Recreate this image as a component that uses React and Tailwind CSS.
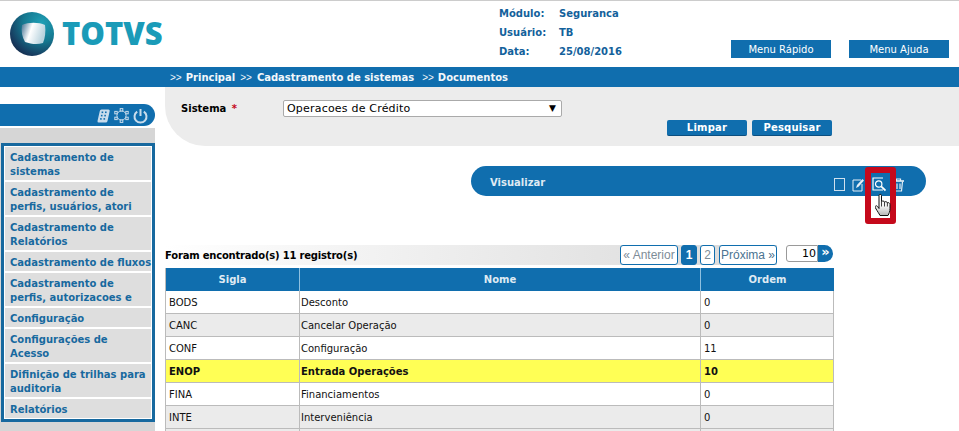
import React from "react";

const font = { fontFamily: '"DejaVu Sans", Verdana, sans-serif' };
const arrowFont = { fontFamily: '"Liberation Sans", Arial, sans-serif' };

const menuItems = [
  ["Cadastramento de", "sistemas"],
  ["Cadastramento de", "perfis, usuários, atori"],
  ["Cadastramento de", "Relatórios"],
  ["Cadastramento de fluxos"],
  ["Cadastramento de", "perfis, autorizacoes e"],
  ["Configuração"],
  ["Configurações de", "Acesso"],
  ["Difinição de trilhas para", "auditoria"],
  ["Relatórios"],
];

const rows = [
  ["BODS", "Desconto", "0"],
  ["CANC", "Cancelar Operação", "0"],
  ["CONF", "Configuração", "11"],
  ["ENOP", "Entrada Operações", "10", true],
  ["FINA", "Financiamentos", "0"],
  ["INTE", "Interveniência", "0"],
];

// TOTVS globe
const Globe = () => (
  <svg width="44" height="44" viewBox="0 0 44 44" className="shrink-0">
    <defs>
      <radialGradient id="globe" cx="0.72" cy="0.25" r="0.95">
        <stop offset="0" stopColor="#1fa0b6" />
        <stop offset="0.45" stopColor="#15778f" />
        <stop offset="0.8" stopColor="#173a5e" />
        <stop offset="1" stopColor="#101f3a" />
      </radialGradient>
      <linearGradient id="globeCore" x1="0" y1="0" x2="1" y2="0.3">
        <stop offset="0" stopColor="#3f6f90" />
        <stop offset="0.45" stopColor="#ffffff" />
        <stop offset="1" stopColor="#b9d3de" />
      </linearGradient>
    </defs>
    <circle cx="22" cy="22" r="22" fill="url(#globe)" />
    <path d="M12 13 C18 10 29 10 35 13 C36 19 35 26 33 31 C27 33 21 32 15 30 C12 25 11 19 12 13 Z" fill="url(#globeCore)" />
  </svg>
);

const SideIcons = () => (
  <div className="flex items-center gap-[4px] pr-[7px] pt-[1px]">
    <svg width="13" height="14" viewBox="0 0 13 14">
      <path d="M4.5 0.5 H11.5 Q13 0.5 12.7 2 L10.5 12 Q10.2 13.5 8.7 13.5 H1.7 Q0.3 13.5 0.5 12 L2.8 2 Q3 0.5 4.5 0.5 Z" fill="#c9dcec" />
      <g fill="#106eae">
        <rect x="4.6" y="2.5" width="1.6" height="1.6" />
        <rect x="8" y="2.5" width="1.6" height="1.6" />
        <rect x="3.9" y="5.8" width="1.6" height="1.6" />
        <rect x="7.3" y="5.8" width="1.6" height="1.6" />
        <rect x="3.1" y="9.1" width="1.6" height="1.6" />
        <rect x="6.5" y="9.1" width="1.6" height="1.6" />
      </g>
    </svg>
    <svg width="15" height="15" viewBox="0 0 15 15" fill="#106eae" stroke="#c9dcec" strokeWidth="1">
      <circle cx="7.5" cy="7.5" r="4.6" />
      <rect x="6.2" y="0.6" width="2.6" height="2.4" />
      <rect x="6.2" y="12" width="2.6" height="2.4" />
      <rect x="0.8" y="3.4" width="2.4" height="2.4" />
      <rect x="11.8" y="3.4" width="2.4" height="2.4" />
      <rect x="0.8" y="9.2" width="2.4" height="2.4" />
      <rect x="11.8" y="9.2" width="2.4" height="2.4" />
    </svg>
    <svg width="15" height="16" viewBox="0 0 15 16" fill="none" stroke="#c9dcec" strokeWidth="2">
      <path d="M4.2 3.6 A6 6 0 1 0 10.8 3.6" />
      <path d="M7.5 1 V8" />
    </svg>
  </div>
);

const ToolIcons = () => (
  <div className="flex items-center pr-[21px] pt-[7px]">
    <div className="w-[11px] h-[13px] border border-[#cfe0ee]" />
    <svg width="13" height="14" viewBox="0 0 13 14" fill="none" stroke="#e6eff6" strokeWidth="1" className="ml-[7px]">
      <path d="M9 2 H1 V13 H10 V6" />
      <path d="M4 10 L5 7 L10.5 1 L12 2.5 L6.5 8.8 Z" fill="#e6eff6" stroke="none" />
    </svg>
    <svg width="14" height="15" viewBox="0 0 14 15" fill="none" stroke="#ffffff" strokeWidth="1.2" className="ml-[7px]">
      <path d="M11 1 H1 V13 H11" />
      <circle cx="6.7" cy="7" r="3.2" />
      <path d="M9.2 9.4 L13.5 13.5" strokeWidth="1.8" />
    </svg>
    <svg width="13" height="14" viewBox="0 0 13 14" fill="none" stroke="#e6eff6" strokeWidth="1.2" className="ml-[6px]">
      <path d="M1 3 H12" strokeWidth="1.6" />
      <path d="M4.5 3 V1 H8.5 V3" />
      <path d="M2.5 3.5 L3.5 13 H9.5 L10.5 3.5" />
      <path d="M5 5.5 V11 M8 5.5 V11" />
    </svg>
  </div>
);

// red highlight and the mouse hand, lying over the toolbar
const Callout = () => (
  <div className="absolute left-[394px] top-[1px] w-[31px] h-[57px] border-[6px] border-[#c5091b] rounded-[3px]">
    <svg width="16" height="24" viewBox="1 0 16 23" className="absolute left-[4px] top-[20px]">
      <defs>
        <linearGradient id="hand" x1="0" y1="0" x2="0" y2="1">
          <stop offset="0" stopColor="#ffffff" />
          <stop offset="0.55" stopColor="#f4f4f4" />
          <stop offset="1" stopColor="#b5b5b5" />
        </linearGradient>
      </defs>
      <path
        d="M5 2 C5 0.5 7.5 0.5 7.5 2 V8 C8.5 7.2 10 7.4 10.5 8.5 C11.5 7.8 13 8.2 13.4 9.3 C14.5 8.8 16 9.4 16 11 V15 C16 18 15 20 14 22 H6 C5 20 3.5 18 1.5 14.5 C0.5 12.5 2.5 11.5 3.6 13 L5 15 Z"
        fill="url(#hand)"
        stroke="#111"
        strokeWidth="1"
      />
      <path d="M7.5 8 V13 M10.5 8.5 V13 M13.4 9.3 V13" stroke="#111" strokeWidth="0.8" />
    </svg>
  </div>
);

const PageBtn = ({ children, active, className = "" }) => (
  <div
    className={`h-[20px] flex items-center justify-center rounded-[3px] border border-[#106eae] text-[12px] tracking-normal whitespace-nowrap font-normal ${
      active ? "bg-[#106eae] text-white !font-bold" : "bg-white text-[#7d8c97]"
    } ${className}`}
    style={arrowFont}
  >
    {children}
  </div>
);

export default function App() {
  return (
    <div className="w-[959px] h-[431px] overflow-hidden bg-white flex flex-col border-t border-[#cccccc]" style={font}>
      {/* Header */}
      <header className="h-[66px] flex shrink-0">
        <div className="w-[499px] pl-[10px] pt-[11px] flex items-start gap-[8px]">
          <Globe />
          <span
            className="text-[31px] leading-[42px] font-extrabold text-[#1a9bb8]"
            style={{ fontFamily: '"Open Sans", sans-serif' }}
          >
            TOTVS
          </span>
        </div>
        <div className="pt-[3px] text-[10px] font-bold text-[#13619b] leading-[19px]">
          <div className="flex"><span className="w-[60px]">Módulo:</span><span>Seguranca</span></div>
          <div className="flex"><span className="w-[60px]">Usuário:</span><span>TB</span></div>
          <div className="flex"><span className="w-[60px]">Data:</span><span>25/08/2016</span></div>
        </div>
        <div className="ml-auto flex gap-[18px] pr-[10px] pt-[39px]">
          <div className="w-[100px] h-[18px] bg-[#106eae] text-white text-[10px] flex items-center justify-center">Menu Rápido</div>
          <div className="w-[100px] h-[18px] bg-[#106eae] text-white text-[10px] flex items-center justify-center">Menu Ajuda</div>
        </div>
      </header>

      {/* Breadcrumb */}
      <div className="h-[20px] shrink-0 bg-[#106eae] pl-[170px] flex items-center text-[10px] font-bold text-[#f2f7fb]">
        <span className="font-normal" style={arrowFont}>&gt;&gt;</span><span className="ml-[4px]">Principal</span>
        <span className="font-normal ml-[5px]" style={arrowFont}>&gt;&gt;</span><span className="ml-[5px]">Cadastramento de sistemas</span>
        <span className="font-normal ml-[8px]" style={arrowFont}>&gt;&gt;</span><span className="ml-[4px]">Documentos</span>
      </div>

      <div className="flex flex-1 min-h-0">
        {/* Sidebar */}
        <aside className="w-[155px] shrink-0 pt-[17px]">
          <div className="h-[22px] bg-[#106eae] rounded-r-[11px] flex items-center justify-end">
            <SideIcons />
          </div>
          <div className="mt-[2px] bg-[#d6d6d6] pt-[15px] pb-[10px] h-[305px]">
            <div className="ml-[1px] border-[3px] border-[#17699f] bg-white">
              <div className="flex flex-col gap-[2px] bg-white border border-white">
                {menuItems.map((item, i) => (
                  <div key={i} className="bg-[#dedede] pl-[5px] pt-[4px] pb-[1px] text-[10px] leading-[14px] font-bold text-[#17699f] whitespace-nowrap">
                    {item.map((line) => (
                      <div key={line}>{line}</div>
                    ))}
                  </div>
                ))}
              </div>
            </div>
          </div>
        </aside>

        {/* Main */}
        <main className="flex-1 min-w-0 pl-[10px]">
          <section className="h-[59px] bg-[#ececec] rounded-bl-[40px] flex flex-col">
            <div className="flex items-center pt-[13px] pl-[16px]">
              <span className="w-[102px] text-[10px] font-bold text-black">
                Sistema <span className="text-[#c5091b] ml-[2px]">*</span>
              </span>
              <div className="w-[279px] h-[17px] bg-white border border-[#aaaaaa] rounded-[2px] flex items-center justify-between pl-[3px] pr-[5px] text-[11px] text-black">
                <span className="pt-[2px] tracking-[0.2px]">Operacoes de Crédito</span>
                <span className="text-[9px]">▼</span>
              </div>
            </div>
            <div className="flex justify-start gap-[5px] pl-[502px] mt-[3px]">
              <div className="w-[80px] h-[16px] bg-[#106eae] border-b border-[#0b4f80] rounded-[2px] text-white text-[10px] font-bold flex items-center justify-center tracking-[0.2px]">Limpar</div>
              <div className="w-[80px] h-[16px] bg-[#106eae] border-b border-[#0b4f80] rounded-[2px] text-white text-[10px] font-bold flex items-center justify-center tracking-[0.2px]">Pesquisar</div>
            </div>
          </section>

          {/* Toolbar */}
          <div className="relative ml-[306px] mt-[20px] w-[455px] h-[30px] bg-[#106eae] rounded-full flex items-center justify-between pl-[19px]">
            <span className="text-[10px] font-bold text-[#dfeaf3] pt-[2px]">Visualizar</span>
            <ToolIcons />
            <Callout />
          </div>

          {/* Records and pagination */}
          <div className="w-[668px] mt-[49px] h-[20px] flex items-center">
            <div className="w-[612px] h-[20px] flex items-center bg-gradient-to-r from-white to-[#d9d9d9] text-[10px] font-bold text-black tracking-[-0.2px]">
              <span>Foram encontrado(s) 11 registro(s)</span>
              <div className="ml-auto flex items-center gap-[3px]">
                <PageBtn className="w-[58px]">« Anterior</PageBtn>
                <PageBtn active className="w-[16px]">1</PageBtn>
                <PageBtn className="w-[15px]">2</PageBtn>
                <PageBtn className="w-[58px] ml-[1px] !text-[#4b7391]">Próxima »</PageBtn>
              </div>
            </div>
            <div className="ml-[9px] flex items-center shrink-0 self-start">
              <div className="w-[32px] h-[17px] bg-white border border-[#9a9a9a] rounded-l-[3px] text-[11px] text-black text-right leading-[15px] pr-[1px]">10</div>
              <div className="w-[15px] h-[17px] bg-[#106eae] rounded-r-full text-white text-[13px] font-bold leading-[13px] text-center">»</div>
            </div>
          </div>

          {/* Table */}
          <div className="mt-[3px] w-[668px] grid grid-cols-[134px_401px_133px] border-l border-[#bbbbbb]">
            <div className="h-[23px] bg-[#106eae] text-[#dfeaf3] text-[10px] font-bold flex items-center justify-center border-r border-[#8fc0e0]">Sigla</div>
            <div className="h-[23px] bg-[#106eae] text-[#dfeaf3] text-[10px] font-bold flex items-center justify-center border-r border-[#8fc0e0]">Nome</div>
            <div className="h-[23px] bg-[#106eae] text-[#dfeaf3] text-[10px] font-bold flex items-center justify-center">Ordem</div>
            {rows.map(([sigla, nome, ordem, selected], i) => {
              const bg = selected ? "bg-[#ffff55] font-bold" : i % 2 === 1 ? "bg-[#ebebeb]" : "bg-white";
              return (
                <React.Fragment key={sigla}>
                  {[sigla, nome, ordem].map((text, j) => (
                    <div key={j} className={`h-[23px] ${bg} border-b border-r border-[#bbbbbb] ${j === 1 ? "pl-[1px]" : "pl-[3px]"} text-[10px] text-[#111111] flex items-center`}>
                      {text}
                    </div>
                  ))}
                </React.Fragment>
              );
            })}
            <div className="h-[23px] bg-[#ebebeb] border-r border-[#bbbbbb]" />
            <div className="h-[23px] bg-[#ebebeb] border-r border-[#bbbbbb]" />
            <div className="h-[23px] bg-[#ebebeb] border-r border-[#bbbbbb]" />
          </div>
        </main>
      </div>
    </div>
  );
}
